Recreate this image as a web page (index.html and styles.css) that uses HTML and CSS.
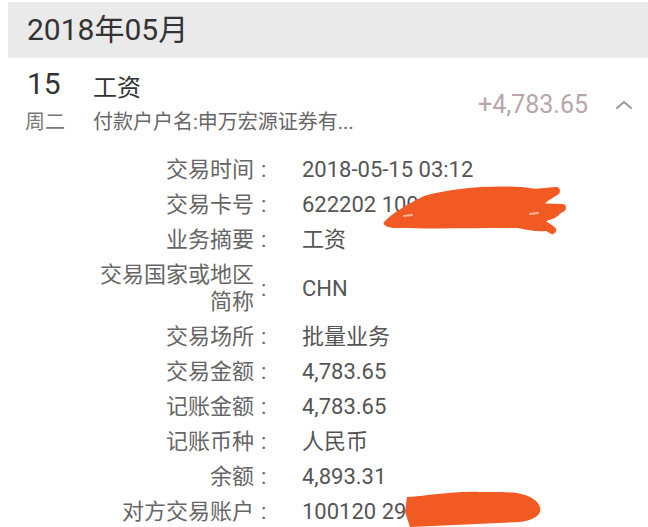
FILE: index.html
```html
<!DOCTYPE html>
<html lang="zh-CN">
<head>
    <meta charset="UTF-8">
    <meta name="viewport" content="width=device-width, initial-scale=1.0">
    <title>交易明细</title>
    <link rel="stylesheet" href="styles.css">
</head>
<body>
    <div class="month">2018年05月</div>

    <div class="item">
        <div class="day">
            <div class="day-num">15</div>
            <div class="weekday">周二</div>
        </div>
        <div class="main">
            <div class="title">工资</div>
            <div class="sub">付款户户名:申万宏源证券有...</div>
        </div>
        <div class="amount">+4,783.65</div>
        <svg class="chevron" width="18" height="10" viewBox="0 0 18 10">
            <polyline points="2,8 9,2 16,8" fill="none" stroke="#9a9a9a" stroke-width="2" stroke-linecap="round" stroke-linejoin="round"/>
        </svg>
    </div>

    <div class="details">
        <div class="label">交易时间</div><div class="colon">:</div><div class="value">2018-05-15 03:12</div>
        <div class="label">交易卡号</div><div class="colon">:</div><div class="value">622202 100</div>
        <div class="label">业务摘要</div><div class="colon">:</div><div class="value">工资</div>
        <div class="label">交易国家或地区简称</div><div class="colon">:</div><div class="value">CHN</div>
        <div class="label">交易场所</div><div class="colon">:</div><div class="value">批量业务</div>
        <div class="label">交易金额</div><div class="colon">:</div><div class="value">4,783.65</div>
        <div class="label">记账金额</div><div class="colon">:</div><div class="value">4,783.65</div>
        <div class="label">记账币种</div><div class="colon">:</div><div class="value">人民币</div>
        <div class="label">余额</div><div class="colon">:</div><div class="value">4,893.31</div>
        <div class="label">对方交易账户</div><div class="colon">:</div><div class="value">100120 29</div>
    </div>

    <!-- redaction marks drawn over the card and account numbers -->
    <svg class="scribble" width="648" height="527" viewBox="0 0 648 527">
        <path d="M384,222 C392,213 408,204 424,196 C450,188 490,185 522,187 L544,190 C552,196 550,203 538,207 L556,205 C566,210 560,218 546,221 L554,227 C548,234 532,231 518,228 C480,228 432,229 398,228 C388,228 382,225 384,222 Z" fill="#f15a22"/>
        <g fill="none" stroke="#f15a22" stroke-linecap="round" stroke-linejoin="round">
            <path d="M522,194 L556,191 L530,207 L562,208 L538,221 L552,230" stroke-width="8"/>
        </g>
        <g stroke="#fbb79a" stroke-width="2" stroke-linecap="round">
            <line x1="404" y1="216" x2="412" y2="215"/>
            <line x1="530" y1="214" x2="538" y2="213"/>
        </g>
        <path d="M407,497 C430,496 450,491 480,492 C505,492 525,491 536,501 C546,511 538,520 520,522 L410,527 L405,512 Z" fill="#f15a22"/>
    </svg>
</body>
</html>
```

FILE: styles.css
```css
body {
    margin: 0;
    background-color: #fff;
    font-family: Roboto, "Noto Sans CJK SC", sans-serif;
    color: #333;
    position: relative;
    overflow: hidden;
}

.month {
    margin: 2px 0 0 8px;
    height: 56px;
    line-height: 56px;
    padding-left: 19px;
    background-color: #eaeaea;
    font-size: 30px;
    color: #333;
}

.item {
    display: flex;
    align-items: flex-start;
    padding: 8px 0 0 25px;
}

.day {
    width: 68px;
}

.day-num {
    font-size: 30px;
    line-height: 36px;
    padding-left: 2px;
    margin-bottom: 6px;
    color: #333;
}

.weekday {
    font-size: 20px;
    line-height: 28px;
    color: #777;
}

.main {
    flex: 1;
}

.title {
    font-size: 24px;
    line-height: 36px;
    padding-top: 4px;
    margin-bottom: 2px;
    color: #333;
}

.sub {
    font-size: 20px;
    line-height: 28px;
    color: #666;
}

.amount {
    font-size: 25px;
    line-height: 30px;
    margin-top: 24px;
    color: #b9a5aa;
}

.chevron {
    margin: 34px 15px 0 27px;
}

.details {
    display: grid;
    grid-template-columns: 156px 48px 1fr;
    padding-left: 98px;
    margin-top: 16px;
    font-size: 22px;
    line-height: 27px;
}

.label {
    text-align: right;
    padding: 4px 0;
    color: #666;
}

.colon {
    align-self: center;
    padding-left: 7px;
    color: #666;
}

.value {
    align-self: center;
    padding: 4px 0;
    color: #555;
}

.scribble {
    position: absolute;
    left: 0;
    top: 0;
    pointer-events: none;
}
```
